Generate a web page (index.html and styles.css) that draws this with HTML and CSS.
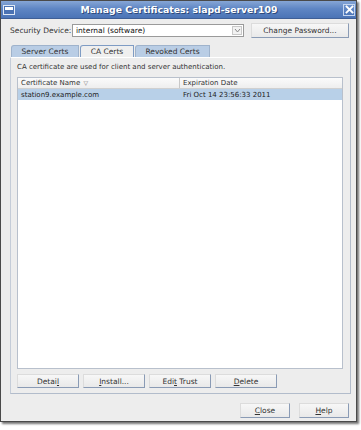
FILE: index.html
```html
<!DOCTYPE html>
<html>
<head>
<meta charset="utf-8">
<link rel="stylesheet" href="styles.css">
</head>
<body>
<div class="window">
  <div class="titlebar">
    <div class="menu-icon"><span></span></div>
    <div class="title">Manage Certificates: slapd-server109</div>
    <div class="close-btn">
      <svg width="9" height="9" viewBox="0 0 9 9"><path d="M1.5 1.5 L7.5 7.5 M7.5 1.5 L1.5 7.5" stroke="#fff" stroke-width="1.8" stroke-linecap="square"/></svg>
    </div>
  </div>
  <div class="content">
    <div class="device-row">
      <span class="label">Security Device:</span>
      <div class="combo">
        <span class="combo-text">internal (software)</span>
        <span class="combo-arrow"><svg width="7" height="5" viewBox="0 0 7 5"><path d="M1 1 L3.5 4 L6 1" fill="none" stroke="#888" stroke-width="1"/></svg></span>
      </div>
      <div class="btn pw-btn"><span>Change Password...</span></div>
    </div>
    <div class="tabs">
      <div class="tab tab-server">Server Certs</div>
      <div class="tab tab-ca active">CA Certs</div>
      <div class="tab tab-revoked">Revoked Certs</div>
    </div>
    <div class="panel">
      <div class="desc">CA certificate are used for client and server authentication.</div>
      <div class="table">
        <div class="thead">
          <div class="th th-name"><span>Certificate Name <span class="sort">&#9661;</span></span></div>
          <div class="th th-date">Expiration Date</div>
        </div>
        <div class="row selected">
          <div class="td td-name">station9.example.com</div>
          <div class="td td-date">Fri Oct 14 23:56:33 2011</div>
        </div>
      </div>
      <div class="actions">
        <div class="btn act"><span>Detai<u>l</u></span></div>
        <div class="btn act"><span><u>I</u>nstall...</span></div>
        <div class="btn act"><span>Edi<u>t</u> Trust</span></div>
        <div class="btn act"><span><u>D</u>elete</span></div>
      </div>
    </div>
    <div class="footer">
      <div class="btn foot"><span><u>C</u>lose</span></div>
      <div class="btn foot"><span><u>H</u>elp</span></div>
    </div>
  </div>
</div>
</body>
</html>
```

FILE: styles.css
```css
html, body {
  margin: 0;
  padding: 0;
  background: #ffffff;
}
body {
  width: 361px;
  height: 430px;
  font-family: "DejaVu Sans", "Liberation Sans", sans-serif;
  font-size: 7px;
  color: #222;
}
.window {
  box-sizing: border-box;
  width: 357px;
  height: 422px;
  background: #ededed;
  border: 1px solid #4a4a4a;
  box-shadow: 2px 2px 2px rgba(0,0,0,0.55);
  display: flex;
  flex-direction: column;
}
.titlebar {
  height: 18px;
  flex: none;
  background: linear-gradient(#86a6d6 0%, #5f86c4 45%, #4b74b6 100%);
  display: flex;
  align-items: center;
  border-bottom: 1px solid #3f5f96;
  box-sizing: border-box;
}
.menu-icon {
  width: 12px;
  height: 10px;
  margin-left: 2px;
  box-sizing: border-box;
  border: 1px solid #dfe8f5;
  background: #4a72b3;
  padding: 1px;
}
.menu-icon span {
  display: block;
  height: 3px;
  background: #ffffff;
}
.title {
  flex: 1;
  text-align: center;
  color: #fff;
  font-weight: bold;
  font-size: 9.3px;
  text-shadow: 1px 1px 0 #2d4a7c;
  white-space: nowrap;
}
.close-btn {
  width: 12px;
  height: 12px;
  margin-right: 1px;
  box-sizing: border-box;
  border: 1px solid #c5d5ee;
  background: linear-gradient(#6d92cc, #4d76b8);
  display: flex;
  align-items: center;
  justify-content: center;
}
.content {
  flex: 1;
  display: flex;
  flex-direction: column;
  padding: 0 7px 0 8px;
}
.device-row {
  display: flex;
  align-items: center;
  height: 15px;
  margin-top: 4px;
  white-space: nowrap;
}
.label {
  width: 62px;
  padding-left: 1px;
  color: #333;
  font-size: 7.5px;
}
.combo {
  width: 172px;
  height: 13px;
  box-sizing: border-box;
  border: 1px solid #9a9a9a;
  background: #fff;
  display: flex;
  align-items: center;
}
.combo-text {
  flex: 1;
  padding-left: 3px;
  color: #111;
  font-size: 7.5px;
}
.combo-arrow {
  width: 10px;
  height: 9px;
  margin-right: 1px;
  border: 1px solid #c8c8c8;
  background: #f2f2f2;
  box-sizing: border-box;
  display: flex;
  align-items: center;
  justify-content: center;
}
.btn {
  box-sizing: border-box;
  background: linear-gradient(#f7f7f7, #e9e9e9);
  border: 1px solid #dcdcdc;
  border-right: 1px solid #8a9bb5;
  border-bottom: 1px solid #8a9bb5;
  display: flex;
  align-items: center;
  justify-content: center;
  color: #333;
  white-space: nowrap;
  font-size: 7.5px;
}
.btn u {
  text-decoration: underline;
  text-underline-offset: 1px;
}
.pw-btn {
  width: 98px;
  height: 15px;
  margin-left: 7px;
}
.tabs {
  display: flex;
  margin-top: 7px;
  margin-left: 2px;
  height: 12px;
}
.tab {
  box-sizing: border-box;
  height: 12px;
  background: #b9cde5;
  border: 1px solid #9fb3cc;
  border-bottom: none;
  display: flex;
  align-items: center;
  justify-content: center;
  color: #333;
  margin-right: 1px;
  border-top-left-radius: 3px;
  font-size: 7.5px;
  white-space: nowrap;
}
.tab-server { width: 68px; }
.tab-ca { width: 54px; }
.tab-revoked { width: 75px; }
.tab.active {
  background: #efefef;
  border: 1px solid #7f9cc4;
  border-bottom: none;
}
.panel {
  box-sizing: border-box;
  width: 341px;
  height: 337px;
  margin-left: 1px;
  border: 1px solid #b2bccb;
  border-top: 1px solid #ffffff;
  border-left: 1px solid #c4ccd8;
  display: flex;
  flex-direction: column;
  padding: 0 6px;
}
.desc {
  margin-top: 4px;
  height: 11px;
  line-height: 11px;
  color: #333;
  white-space: nowrap;
}
.table {
  margin-top: 4px;
  width: 326px;
  height: 292px;
  box-sizing: border-box;
  background: #fff;
  border: 1px solid #b8c0cc;
}
.thead {
  display: flex;
  height: 11px;
  background: linear-gradient(#fbfbfb, #eeeeee);
  border-bottom: 1px solid #d0d0d0;
  box-sizing: border-box;
}
.th {
  display: flex;
  align-items: center;
  padding-left: 3px;
  color: #333;
  box-sizing: border-box;
  white-space: nowrap;
}
.th-name {
  width: 162px;
  border-right: 1px solid #c8c8c8;
}
.sort {
  font-size: 6px;
  margin-left: 1px;
  color: #777;
}
.th-date {
  flex: 1;
}
.row {
  display: flex;
  height: 11px;
  align-items: center;
}
.row.selected {
  background: #b8d0e8;
}
.td {
  padding-left: 3px;
  box-sizing: border-box;
  color: #222;
  white-space: nowrap;
}
.td-name { width: 162px; }
.td-date { flex: 1; }
.actions {
  display: flex;
  gap: 4px;
  margin-top: 5px;
}
.act {
  width: 62px;
  height: 14px;
}
.footer {
  display: flex;
  justify-content: flex-end;
  gap: 9px;
  margin-top: 9px;
}
.foot {
  width: 50px;
  height: 15px;
}
```
